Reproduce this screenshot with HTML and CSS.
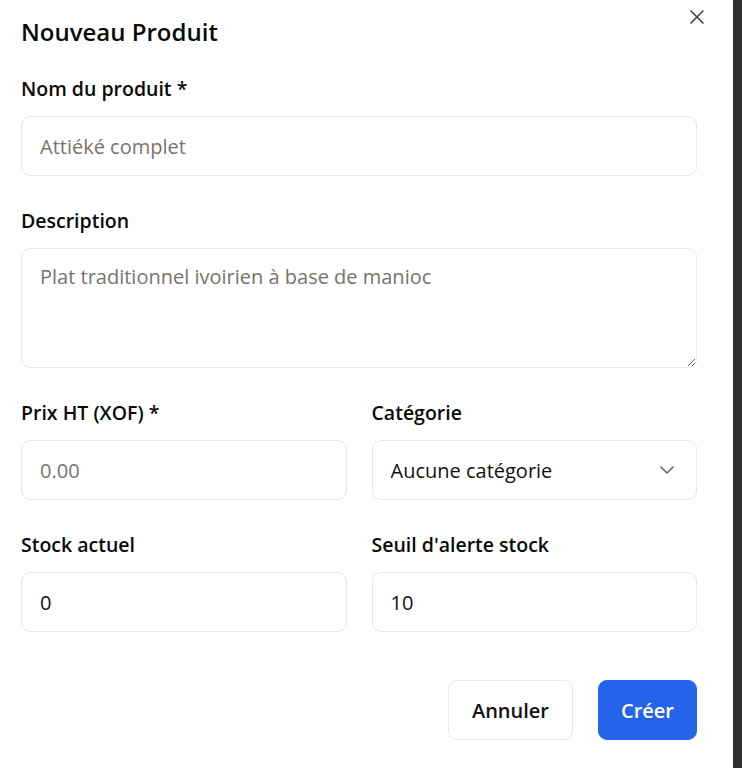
FILE: index.html
```html
<!DOCTYPE html>
<html lang="fr">
<head>
<meta charset="utf-8">
<title>Nouveau Produit</title>
<link rel="stylesheet" href="styles.css">
</head>
<body>
<div class="page">
  <div class="dialog">
    <button class="close" aria-label="Fermer">
      <svg width="16" height="16" viewBox="0 0 16 16"><path d="M2 2 L14 14 M14 2 L2 14" stroke="#3f3f46" stroke-width="1.6" stroke-linecap="round" fill="none"/></svg>
    </button>
    <h1 class="title">Nouveau Produit</h1>
    <form class="form">
      <div class="field">
        <label class="label">Nom du produit *</label>
        <input class="input" type="text" placeholder="Attiéké complet">
      </div>
      <div class="field">
        <label class="label">Description</label>
        <textarea class="input textarea" placeholder="Plat traditionnel ivoirien à base de manioc"></textarea>
      </div>
      <div class="row">
        <div class="field">
          <label class="label">Prix HT (XOF) *</label>
          <input class="input" type="text" placeholder="0.00">
        </div>
        <div class="field">
          <label class="label">Catégorie</label>
          <div class="select-wrap">
            <select class="input select">
              <option>Aucune catégorie</option>
            </select>
            <svg class="chevron" width="16" height="10" viewBox="0 0 16 10"><path d="M2 2 L8 8 L14 2" stroke="#6b6b6b" stroke-width="1.7" fill="none" stroke-linecap="round" stroke-linejoin="round"/></svg>
          </div>
        </div>
      </div>
      <div class="row">
        <div class="field">
          <label class="label">Stock actuel</label>
          <input class="input" type="text" value="0">
        </div>
        <div class="field">
          <label class="label">Seuil d'alerte stock</label>
          <input class="input" type="text" value="10">
        </div>
      </div>
      <div class="actions">
        <button type="button" class="btn btn-outline">Annuler</button>
        <button type="button" class="btn btn-primary">Créer</button>
      </div>
    </form>
  </div>
  <div class="scrollbar"></div>
</div>
</body>
</html>
```
FILE: styles.css
```css
* { box-sizing: border-box; }
html, body { margin: 0; height: 100%; }
body {
  font-family: "Open Sans", "Noto Sans", sans-serif;
  color: #111111;
  background: #ffffff;
}
.page {
  display: flex;
  height: 768px;
}
.dialog {
  position: relative;
  flex: 1;
  padding: 15px 36px 0 21px;
  background: #ffffff;
}
.scrollbar {
  width: 9px;
  background: #2f2f2f;
}
.close {
  position: absolute;
  top: 8px;
  right: 27px;
  width: 18px;
  height: 18px;
  padding: 0;
  border: 0;
  background: none;
  display: flex;
  align-items: center;
  justify-content: center;
}
.title {
  margin: 0;
  font-size: 24px;
  line-height: 34px;
  font-weight: 600;
  color: #0a0a0a;
}
.form {
  margin-top: 26px;
  display: flex;
  flex-direction: column;
  gap: 31px;
}
.field {
  display: flex;
  flex-direction: column;
  gap: 13px;
  min-width: 0;
}
.label {
  font-size: 19.5px;
  line-height: 28px;
  font-weight: 600;
  color: #0a0a0a;
}
.input {
  width: 100%;
  height: 60px;
  padding: 0 18px;
  border: 1px solid #e7e7e7;
  border-radius: 9px;
  font-family: inherit;
  font-size: 20px;
  color: #111111;
  background: #ffffff;
  outline: none;
}
.input::placeholder { color: #78736e; }
.textarea {
  height: 120px;
  padding-top: 14px;
  line-height: 28px;
  resize: vertical;
}
.row {
  display: grid;
  grid-template-columns: 1fr 1fr;
  gap: 25px;
}
.select-wrap { position: relative; }
.select {
  appearance: none;
  -webkit-appearance: none;
}
.chevron {
  position: absolute;
  right: 22px;
  top: 25px;
  pointer-events: none;
}
.actions {
  display: flex;
  justify-content: flex-end;
  gap: 25px;
  margin-top: 17px;
}
.btn {
  height: 60px;
  padding: 0 23px;
  border-radius: 9px;
  font-family: inherit;
  font-size: 20px;
  font-weight: 600;
}
.btn-outline {
  border: 1px solid #e7e7e7;
  background: #ffffff;
  color: #111111;
}
.btn-primary {
  padding: 0 22px;
  border: 1px solid #2563eb;
  background: #2563eb;
  color: #ffffff;
}
```
